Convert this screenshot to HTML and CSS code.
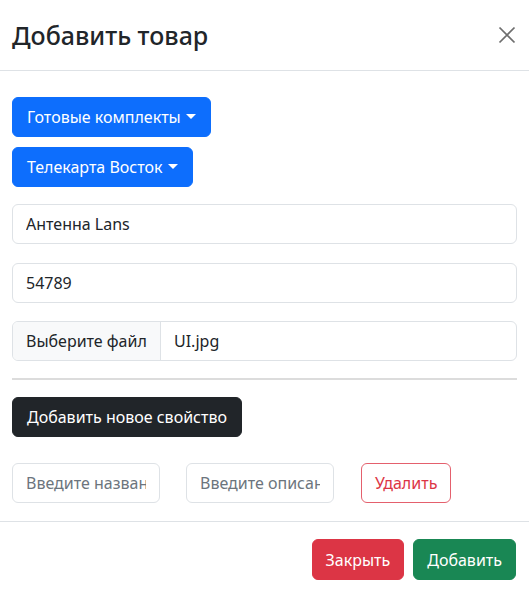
FILE: index.html
```html
<!DOCTYPE html>
<html lang="ru">
<head>
<meta charset="utf-8">
<title>Добавить товар</title>
<link rel="stylesheet" href="styles.css">
</head>
<body>
<div class="modal">
  <header class="modal-header">
    <h1 class="modal-title">Добавить товар</h1>
    <button class="btn-close" type="button" aria-label="Close">
      <svg width="20" height="20" viewBox="0 0 16 16"><path d="M2 2 L14 14 M14 2 L2 14" stroke="#6e6e6e" stroke-width="1.4" fill="none"/></svg>
    </button>
  </header>
  <div class="modal-body">
    <div class="dropdowns">
      <button class="btn btn-primary dropdown-toggle" type="button">Готовые комплекты</button>
      <button class="btn btn-primary dropdown-toggle" type="button">Телекарта Восток</button>
    </div>
    <div class="fields">
      <input class="form-control" type="text" value="Антенна Lans">
      <input class="form-control" type="text" value="54789">
      <div class="file-input">
        <span class="file-btn">Выберите файл</span>
        <span class="file-name">UI.jpg</span>
      </div>
    </div>
    <hr class="divider">
    <div class="props">
      <button class="btn btn-dark" type="button">Добавить новое свойство</button>
      <div class="prop-row">
        <input class="form-control small" type="text" placeholder="Введите название">
        <input class="form-control small" type="text" placeholder="Введите описание">
        <button class="btn btn-outline-danger" type="button">Удалить</button>
      </div>
    </div>
  </div>
  <footer class="modal-footer">
    <button class="btn btn-danger" type="button">Закрыть</button>
    <button class="btn btn-success" type="button">Добавить</button>
  </footer>
</div>
</body>
</html>
```

FILE: styles.css
```css
* { box-sizing: border-box; }
html, body { margin: 0; padding: 0; background: #fff; }
body {
  font-family: "Noto Sans", "Open Sans", sans-serif;
  color: #212529;
  font-size: 16px;
}
.modal {
  width: 529px;
  height: 593px;
  display: flex;
  flex-direction: column;
}
.modal-header {
  height: 71px;
  display: flex;
  align-items: center;
  justify-content: space-between;
  padding: 0 12px;
  border-bottom: 1px solid #dee2e6;
}
.modal-title {
  margin: 0;
  font-size: 25px;
  font-weight: 500;
  line-height: 1.2;
  color: #212529;
}
.btn-close {
  background: none;
  border: 0;
  padding: 0;
  width: 20px;
  height: 20px;
  display: flex;
}
.modal-body {
  padding: 26px 12px 0 12px;
  flex: 1;
}
.btn {
  font-family: inherit;
  font-size: 16px;
  line-height: 24px;
  height: 40px;
  padding: 0 14px;
  border-radius: 6px;
  border: 1px solid transparent;
  color: #fff;
  cursor: pointer;
}
.btn-primary { background: #0d6efd; border-color: #0d6efd; }
.btn-dark { background: #212529; border-color: #212529; }
.btn-danger { background: #dc3545; border-color: #dc3545; }
.btn-success { background: #198754; border-color: #198754; }
.btn-outline-danger { background: #fff; border-color: #e4606d; color: #dc3545; }
.dropdown-toggle::after {
  content: "";
  display: inline-block;
  margin-left: 5px;
  vertical-align: 4px;
  border-top: 5px solid #fff;
  border-left: 5px solid transparent;
  border-right: 5px solid transparent;
}
.dropdowns {
  display: flex;
  flex-direction: column;
  align-items: flex-start;
  gap: 10px;
}
.fields {
  display: flex;
  flex-direction: column;
  gap: 18.5px;
  margin-top: 17px;
}
.form-control {
  font-family: inherit;
  font-size: 16px;
  color: #212529;
  height: 40px;
  width: 100%;
  padding: 0 13px;
  border: 1px solid #dee2e6;
  border-radius: 6px;
  background: #fff;
  outline: none;
}
.form-control::placeholder { color: #6c757d; }
.file-input {
  display: flex;
  height: 40px;
  border: 1px solid #dee2e6;
  border-radius: 6px;
  overflow: hidden;
}
.file-btn {
  display: flex;
  align-items: center;
  padding: 0 13px;
  background: #f8f9fa;
  border-right: 1px solid #dee2e6;
  width: 148px;
}
.file-name {
  display: flex;
  align-items: center;
  padding-left: 13px;
}
.divider {
  margin: 17px 0 0;
  border: 0;
  border-top: 2px solid #dcdcdc;
}
.props {
  display: flex;
  flex-direction: column;
  align-items: flex-start;
  margin-top: 17px;
  gap: 26px;
}
.prop-row {
  display: flex;
  gap: 26px;
  align-items: center;
}
.form-control.small { width: 148px; }
.prop-row .btn { padding: 0 13px; width: 90px; margin-left: 1px; }
.modal-footer {
  height: 72px;
  border-top: 1px solid #dee2e6;
  display: flex;
  justify-content: flex-end;
  align-items: flex-start;
  gap: 9px;
  padding: 17px 13px 0;
}
.modal-footer .btn { height: 41px; padding: 0 13px; }
```
